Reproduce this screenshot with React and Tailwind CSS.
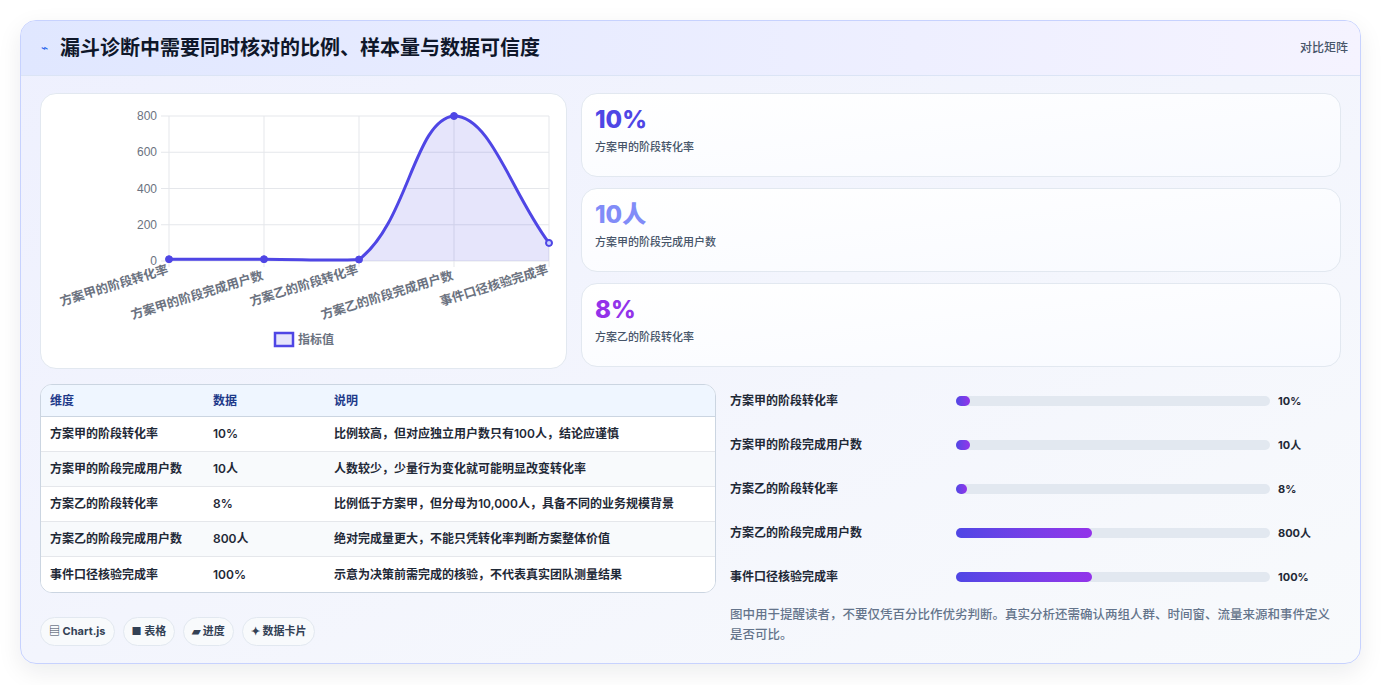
import React from "react";

const rows = [
  ["方案甲的阶段转化率", "10%", "比例较高，但对应独立用户数只有100人，结论应谨慎"],
  ["方案甲的阶段完成用户数", "10人", "人数较少，少量行为变化就可能明显改变转化率"],
  ["方案乙的阶段转化率", "8%", "比例低于方案甲，但分母为10,000人，具备不同的业务规模背景"],
  ["方案乙的阶段完成用户数", "800人", "绝对完成量更大，不能只凭转化率判断方案整体价值"],
  ["事件口径核验完成率", "100%", "示意为决策前需完成的核验，不代表真实团队测量结果"],
];
const bars = [
  ["方案甲的阶段转化率", 14, "10%"],
  ["方案甲的阶段完成用户数", 14, "10人"],
  ["方案乙的阶段转化率", 11, "8%"],
  ["方案乙的阶段完成用户数", 136, "800人"],
  ["事件口径核验完成率", 136, "100%"],
];
const xs = [168, 263, 358, 453, 548];
const ys = [258.2, 258.2, 258.5, 115, 241.9];
const labels = ["方案甲的阶段转化率", "方案甲的阶段完成用户数", "方案乙的阶段转化率", "方案乙的阶段完成用户数", "事件口径核验完成率"];
const line = "M168,258.2 C206,258.2 225,258.2 263,258.2 C301,258.3 331,260 358,258.5 C407,221.5 413.5,118.5 453,115 C489.5,115 510,191.1 548,241.9";

function Chart() {
  return (
    <svg viewBox="40 93 527 275" width="527" height="275" className="block">
      {[115, 151.25, 187.5, 223.75, 260].map((y, i) => (
        <g key={i}>
          <line x1="160" x2="548" y1={y} y2={y} stroke="#e5e7eb" />
          <text x="156" y={y + 4} textAnchor="end" fontSize="12" fill="#6b7280" fontFamily="Liberation Sans, sans-serif">{800 - i * 200}</text>
        </g>
      ))}
      {xs.map((x) => <line key={x} x1={x} x2={x} y1="115" y2="266" stroke="#e5e7eb" />)}
      <path d={line + " L548,260 L168,260 Z"} fill="rgba(79,70,229,0.14)" />
      <path d={line} fill="none" stroke="#4f46e5" strokeWidth="3" />
      {xs.map((x, i) => <circle key={x} cx={x} cy={ys[i]} r="3.5" fill="#4f46e5" stroke="#4f46e5" strokeWidth="1" />)}
      <circle cx="548" cy="241.9" r="2" fill="#c7d2fe" />
      {labels.map((l, i) => (
        <text key={l} transform={`translate(${xs[i]},${i % 2 ? 278 : 272}) rotate(-17)`} textAnchor="end" fontSize="12.5" fontWeight="600" fill="#6b7280" fontFamily="Liberation Sans, 'Noto Sans CJK SC', sans-serif">{l}</text>
      ))}
      <rect x="274" y="332" width="18" height="13" fill="rgba(79,70,229,0.14)" stroke="#4f46e5" strokeWidth="2.5" />
      <text x="297" y="343" fontSize="12" fontWeight="600" fill="#6b7280" fontFamily="Liberation Sans, 'Noto Sans CJK SC', sans-serif">指标值</text>
    </svg>
  );
}

export default function App() {
  return (
    <div className="min-h-[685px] bg-white p-5 pb-0" style={{ fontFamily: "Inter, 'Noto Sans CJK SC', sans-serif" }}>
      <div className="rounded-2xl border border-[#c7d2fe] bg-gradient-to-br from-[#eef0fe] to-[#f8fafc] shadow-[0_8px_24px_rgba(15,23,42,0.08)] overflow-hidden h-[644px]">
        <div className="h-[55px] flex items-center justify-between pl-5 pr-[12px] bg-gradient-to-r from-[#e0e7ff] to-[#f5f3ff] border-b border-[#dbe4f5]">
          <div className="flex items-center gap-3">
            <span className="text-[#2563eb] text-[12px]">⌁</span>
            <h1 className="text-[20px] font-bold text-[#0f172a]">漏斗诊断中需要同时核对的比例、样本量与数据可信度</h1>
          </div>
          <span className="text-[12px] text-[#475569] font-medium">对比矩阵</span>
        </div>
        <div className="px-[19px] pt-[17px]">
          <div className="flex gap-[14px]">
            <div className="w-[527px] h-[276px] bg-white rounded-2xl border border-[#e2e8f0] overflow-hidden">
              <Chart />
            </div>
            <div className="flex-1 flex flex-col gap-[11px]">
              {[["10%", "text-[#4f46e5]", "方案甲的阶段转化率"], ["10人", "text-[#818cf8]", "方案甲的阶段完成用户数"], ["8%", "text-[#9333ea]", "方案乙的阶段转化率"]].map(([v, c, l]) => (
                <div key={l} className="h-[84px] rounded-2xl border border-[#e2e8f0] bg-gradient-to-br from-white to-[#f8faff] px-[13px] pt-[12px]">
                  <div className={`text-[24px] font-extrabold leading-[28px] ${c}`}>{v}</div>
                  <div className="text-[11px] font-medium text-[#475569] mt-[5px]">{l}</div>
                </div>
              ))}
            </div>
          </div>
          <div className="flex gap-[14px] mt-[15px]">
            <div className="w-[676px]">
              <div className="rounded-xl border border-[#cbd5e1] overflow-hidden bg-white">
                <div className="flex h-[32px] items-center bg-[#eff6ff] border-b border-[#cbd5e1] text-[12px] font-bold text-[#1e3a8a]">
                  <div className="w-[172px] pl-[9px]">维度</div><div className="w-[121px]">数据</div><div>说明</div>
                </div>
                {rows.map((r, i) => (
                  <div key={i} className={`flex h-[35px] items-center text-[12px] font-semibold text-[#1f2937] ${i < 4 ? "border-b border-[#e5e7eb]" : ""} ${i % 2 ? "bg-[#f8fafc]" : "bg-white"}`}>
                    <div className="w-[172px] pl-[9px]">{r[0]}</div><div className="w-[121px]">{r[1]}</div><div>{r[2]}</div>
                  </div>
                ))}
              </div>
              <div className="flex gap-2 mt-6">
                {["▤ Chart.js", "■ 表格", "▰ 进度", "✦ 数据卡片"].map((t) => (
                  <span key={t} className="h-[29px] px-[8px] flex items-center rounded-full border border-[#e2e8f0] bg-[#f8fafc] text-[11px] font-bold text-[#334155]">{t}</span>
                ))}
              </div>
            </div>
            <div className="flex-1 -mt-[5px]">
              {bars.map(([l, w, v]) => (
                <div key={l} className="flex items-center h-[44px] text-[12px] font-semibold text-[#1f2937]">
                  <div className="w-[226px]">{l}</div>
                  <div className="w-[314px] h-[10px] rounded-full bg-[#e2e8f0]">
                    <div className="h-full rounded-full bg-gradient-to-r from-[#4f46e5] to-[#9333ea]" style={{ width: w }} />
                  </div>
                  <div className="ml-2 text-[11px] font-bold">{v}</div>
                </div>
              ))}
              <p className="mt-[6px] text-[12.5px] leading-[20px] font-medium text-[#64748b]">图中用于提醒读者，不要仅凭百分比作优劣判断。真实分析还需确认两组人群、时间窗、流量来源和事件定义是否可比。</p>
            </div>
          </div>
        </div>
      </div>
    </div>
  );
}
